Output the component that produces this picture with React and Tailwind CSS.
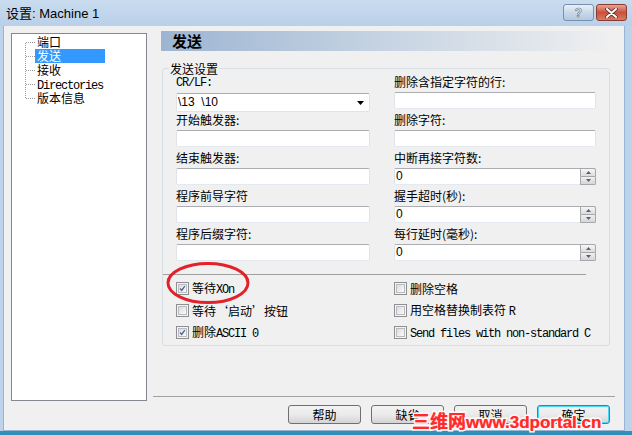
const mono = "font-['Liberation_Mono',monospace] tracking-[-1.2px]"

function M({ children }) {
  return <span className={mono}>{children}</span>
}

function TextBox({ value = "", spin = false }) {
  return (
    <div className="h-[17px] flex bg-white border border-[#e2e3ea] border-t-[#abadb3] border-b-[#e3e9ef] rounded-[2px]">
      <input
        readOnly
        value={value}
        className="flex-1 min-w-0 px-[1px] outline-none bg-transparent font-['Liberation_Sans',sans-serif] text-[12px] leading-[15px]"
      />
      {spin && (
        <div className="w-[16px] -my-px -mr-px flex flex-col">
          <div className="flex-1 flex items-center justify-center border border-[#a7a7a7] rounded-tr-[2px] bg-linear-to-b from-[#f6f6f6] to-[#dcdcdc]">
            <svg width="5" height="3" viewBox="0 0 5 3">
              <path d="M2.5 0 L5 3 L0 3Z" fill="#4d6185" />
            </svg>
          </div>
          <div className="flex-1 flex items-center justify-center border border-t-0 border-[#a7a7a7] rounded-br-[2px] bg-linear-to-b from-[#f0f0f0] to-[#d6d6d6]">
            <svg width="5" height="3" viewBox="0 0 5 3">
              <path d="M0 0 L5 0 L2.5 3Z" fill="#4d6185" />
            </svg>
          </div>
        </div>
      )}
    </div>
  )
}

function Field({ label, h = "h-[21px]", children }) {
  return (
    <div>
      <div className={h + " flex items-end pb-[3px] leading-[14px]"}>{label}</div>
      {children}
    </div>
  )
}

function Check({ checked, children }) {
  return (
    <div className="h-[13px] flex items-center">
      <div className="w-[13px] h-[13px] shrink-0 border border-[#8e8f8f] bg-[#f4f4f4] p-[1px]">
        <div className="w-full h-full border border-[#b8bcc2] bg-linear-to-br from-[#dcdcdc] to-[#fbfbfb] flex items-center justify-center">
          {checked && (
            <svg width="9" height="9" viewBox="0 0 9 9">
              <path d="M1.5 4.5 L3.5 7 L7.5 1.5" fill="none" stroke="#4a5f97" strokeWidth="1.6" />
            </svg>
          )}
        </div>
      </div>
      <span className="ml-[3px] leading-[14px] whitespace-nowrap">{children}</span>
    </div>
  )
}

function Btn({ children, primary }) {
  return (
    <button
      className={
        "w-[73px] h-[19px] rounded-[3px] border text-[12px] leading-[16px] bg-linear-to-b from-[#f2f2f2] via-[#ebebeb] to-[#d4d4d4] " +
        (primary ? "border-[#3c7fb1] shadow-[inset_0_0_0_1px_#48d8fb]" : "border-[#707070]")
      }
    >
      {children}
    </button>
  )
}

function TreeLines() {
  return (
    <svg width="10" height="70" viewBox="0 0 10 70" shapeRendering="crispEdges" className="shrink-0">
      <path d="M0.5 8 V64" stroke="#9a9a9a" strokeDasharray="1 1" />
      {[7, 21, 35, 49, 63].map((y) => (
        <path key={y} d={`M1 ${y + 0.5} H10`} stroke="#9a9a9a" strokeDasharray="1 1" />
      ))}
    </svg>
  )
}

export default function App() {
  return (
    <div className="relative w-[632px] h-[435px] overflow-hidden bg-[#bcd3eb] flex flex-col text-[12px] text-black font-['Noto_Sans_CJK_SC','Liberation_Sans',sans-serif]">
      {/* title bar */}
      <div className="h-[26px] shrink-0 flex items-start bg-linear-to-b from-[#cadcef] to-[#b9d0e9]">
        <div className="pl-[6px] pt-[5px] text-[13px] leading-[16px]">
          设置<span className="font-['Liberation_Sans',sans-serif]">: Machine 1</span>
        </div>
        <div className="ml-auto mr-[5px] mt-[4px] flex gap-[2px]">
          <div className="w-[31px] h-[17px] rounded-[3px] border border-[#7690ae] bg-linear-to-b from-[#e9f0f8] via-[#c9d9ea] to-[#b3c9e1] flex items-center justify-center text-[12px] font-bold text-white [-webkit-text-stroke:0.6px_#5a6f88] font-['Liberation_Sans',sans-serif]">
            ?
          </div>
          <div className="w-[31px] h-[17px] rounded-[3px] border border-[#8a3a2e] bg-linear-to-b from-[#e6a595] via-[#c9503d] to-[#d87a63] flex items-center justify-center">
            <svg width="13" height="10" viewBox="0 0 13 10">
              <path d="M2 1 L11 9 M11 1 L2 9" stroke="#5c2a22" strokeWidth="3.6" strokeLinecap="round" />
              <path d="M2 1 L11 9 M11 1 L2 9" stroke="#fff" strokeWidth="2" strokeLinecap="round" />
            </svg>
          </div>
        </div>
      </div>

      {/* client */}
      <div className="h-[405px] ml-[3px] w-[622px] bg-[#f0f0f0] border-l border-r border-b border-[#98b4d3] flex pl-[7px] pt-[5px]">
        {/* tree */}
        <div className="w-[136px] h-[368px] mt-[2px] shrink-0 bg-white border border-[#828790] pl-[13px] pt-[1px] flex">
          <TreeLines />
          <div className="flex flex-col">
            <div className="h-[14px] leading-[14px] px-[2px]">端口</div>
            <div className="h-[14px] leading-[14px] px-[2px] bg-[#3399ff] text-white">发送</div>
            <div className="h-[14px] leading-[14px] px-[2px]">接收</div>
            <div className="h-[14px] leading-[14px] px-[2px]">
              <M>Directories</M>
            </div>
            <div className="h-[14px] leading-[14px] px-[2px]">版本信息</div>
          </div>
        </div>

        {/* right pane */}
        <div className="ml-[6px] w-[462px] flex flex-col">
          <div className="ml-[8px] h-[20px] w-[454px] bg-linear-to-r from-[#9db5d2] via-[#c7d4e3] to-[#f0f0f0] pl-[11px] text-[15px] font-bold leading-[20px]">
            发送
          </div>

          <fieldset className="mt-[15px] ml-[9px] w-[448px] border border-[#d5dfe5] rounded-[3px] pb-[6px]">
            <legend className="ml-[6px] px-[1px] leading-[5px]">发送设置</legend>
            <div className="px-[13px] grid grid-cols-[194px_202px] gap-x-[24px]">
              <div className="flex flex-col">
                <Field label={<M>CR/LF:</M>} h="h-[22px]">
                  <div className="h-[19px] flex items-center bg-white border border-[#e2e3ea] border-t-[#abadb3] rounded-[2px] pl-[1px] pr-[5px] font-['Liberation_Sans',sans-serif]">
                    <span className="leading-[15px] whitespace-pre">{"\\13  \\10"}</span>
                    <svg width="7" height="4" viewBox="0 0 7 4" className="ml-auto">
                      <path d="M0 0 H7 L3.5 4Z" fill="#000" />
                    </svg>
                  </div>
                </Field>
                <Field label="开始触发器:" h="h-[18px]">
                  <TextBox />
                </Field>
                <Field label="结束触发器:">
                  <TextBox />
                </Field>
                <Field label="程序前导字符">
                  <TextBox />
                </Field>
                <Field label="程序后缀字符:">
                  <TextBox />
                </Field>
              </div>
              <div className="flex flex-col">
                <Field label="删除含指定字符的行:">
                  <TextBox />
                </Field>
                <Field label="删除字符:">
                  <TextBox />
                </Field>
                <Field label="中断再接字符数:">
                  <TextBox value="0" spin />
                </Field>
                <Field label="握手超时(秒):">
                  <TextBox value="0" spin />
                </Field>
                <Field label="每行延时(毫秒):">
                  <TextBox value="0" spin />
                </Field>
              </div>
            </div>

            <div className="mt-[13px] w-[423px] h-px bg-[#a0a0a0]" />

            <div className="mt-[7px] px-[13px] grid grid-cols-[194px_202px] gap-x-[24px] gap-y-[9px]">
              <Check checked>
                等待<M>XOn</M>
              </Check>
              <Check>删除空格</Check>
              <Check>等待‘启动’按钮</Check>
              <Check>
                用空格替换制表符 <M>R</M>
              </Check>
              <Check checked>
                删除<M>ASCII 0</M>
              </Check>
              <Check>
                <M>Send files with non-standard C</M>
              </Check>
            </div>
          </fieldset>

          <div className="mt-[50px] h-px w-[462px] bg-[#a0a0a0]" />
          <div className="mt-[8px] pr-[5px] flex justify-end gap-[10px]">
            <Btn>帮助</Btn>
            <Btn>缺省</Btn>
            <Btn>取消</Btn>
            <Btn primary>确定</Btn>
          </div>
        </div>
      </div>
      <div className="flex-1 bg-[#2f8fb8]" />

      {/* annotation ellipse */}
      <svg className="absolute left-[165px] top-[261px]" width="86" height="44" viewBox="0 0 86 44">
        <ellipse cx="43" cy="22" rx="40" ry="19.5" fill="none" stroke="#e3212b" strokeWidth="3" />
      </svg>

      {/* watermark */}
      <div className="absolute left-[412px] top-[409px] leading-[22px] whitespace-nowrap text-[#ff2b2b] font-bold [-webkit-text-stroke:3px_#fff] [paint-order:stroke_fill] [text-shadow:0_0_1px_#ff6a6a]">
        <span className="text-[18px]">三维网</span>
        <span className="text-[17px] font-['Liberation_Sans',sans-serif]">www.3dportal.cn</span>
      </div>
    </div>
  )
}
